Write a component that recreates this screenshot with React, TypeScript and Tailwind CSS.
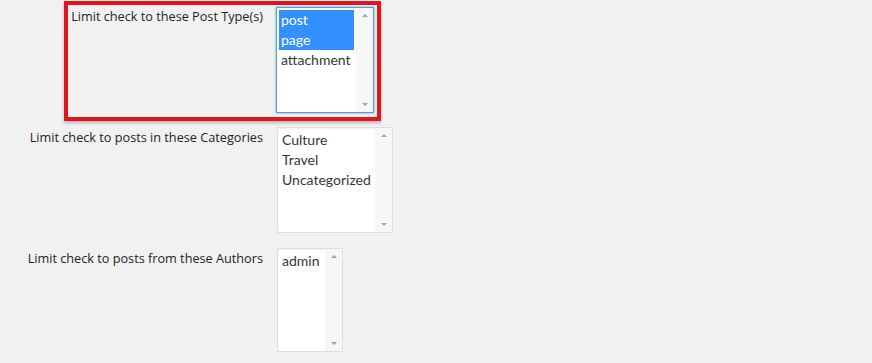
import React from 'react';

type ListBoxProps = {
  options: string[];
  selected?: string[];
  focused?: boolean;
  width: string;
  height: string;
};

function ListBox({ options, selected = [], focused = false, width, height }: ListBoxProps) {
  const frame = focused
    ? 'border-[#5b9dd9] shadow-[0_0_2px_rgba(30,140,190,0.8)]'
    : 'border-[#dddddd] shadow-[inset_0_1px_2px_rgba(0,0,0,0.07)]';
  return (
    <div className={`flex shrink-0 border bg-white ${frame} ${width} ${height}`}>
      <ul className="flex-1 p-[2px] font-['Lato',sans-serif]">
        {options.map((opt) => (
          <li
            key={opt}
            className={`h-5 pl-[2px] text-[14px] leading-5 ${
              selected.includes(opt) ? 'bg-[#3390ff] text-white' : 'text-[#32373c]'
            }`}
          >
            {opt}
          </li>
        ))}
      </ul>
      <div className="flex w-[17px] flex-col items-center justify-between bg-[#f7f7f7] py-[6px]">
        <span className="h-0 w-0 border-x-[3px] border-b-[3px] border-x-transparent border-b-[#a3a3a3]" />
        <span className="h-0 w-0 border-x-[3px] border-t-[3px] border-x-transparent border-t-[#a3a3a3]" />
      </div>
    </div>
  );
}

const label = 'whitespace-nowrap text-right text-[12.7px] font-medium leading-5 text-[#1d2327]';

export default function App() {
  return (
    <main
      className="h-[363px] w-[872px] overflow-hidden bg-[#f1f1f1]"
      style={{ fontFamily: '"Open Sans", "Noto Sans", sans-serif' }}
    >
      {/* highlighted row */}
      <div className="ml-[64px] mt-[1px] flex h-[120px] w-[317px] border-4 border-[#e0161e] shadow-[0_2px_3px_rgba(0,0,0,0.25)]">
        <div className={`w-[195px] pt-[1px] ${label}`}>Limit check to these Post Type(s)</div>
        <div className="ml-[13px] pt-[2px]">
          <ListBox
            options={['post', 'page', 'attachment']}
            selected={['post', 'page']}
            focused
            width="w-[98px]"
            height="h-[106px]"
          />
        </div>
      </div>

      <div className="mt-[6px] flex">
        <div className={`w-[263px] ${label}`}>Limit check to posts in these Categories</div>
        <div className="ml-[14px]">
          <ListBox options={['Culture', 'Travel', 'Uncategorized']} width="w-[116px]" height="h-[106px]" />
        </div>
      </div>

      <div className="mt-[15px] flex">
        <div className={`w-[263px] ${label}`}>Limit check to posts from these Authors</div>
        <div className="ml-[14px]">
          <ListBox options={['admin']} width="w-[66px]" height="h-[104px]" />
        </div>
      </div>
    </main>
  );
}
